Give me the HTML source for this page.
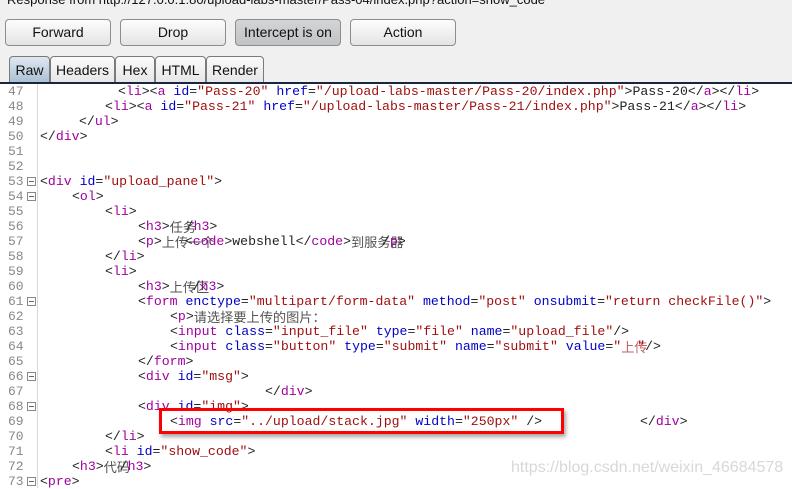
<!DOCTYPE html>
<html><head><meta charset="utf-8"><style>
*{margin:0;padding:0;box-sizing:border-box}
body{width:792px;height:488px;overflow:hidden;background:#fff;position:relative;font-family:"Liberation Sans","Noto Sans CJK SC",sans-serif}
.top{position:absolute;left:0;top:0;width:792px;height:83px;background:#f0f0f0}
.resp{position:absolute;left:7px;top:-8px;font-size:13px;color:#111;white-space:nowrap}
.btn{position:absolute;top:19px;height:27px;width:106px;border:1px solid #8d8d8d;border-radius:4px;background:linear-gradient(#fdfdfd,#e4e4e4);font-size:14px;text-align:center;line-height:25px;color:#111}
.btn.on{background:linear-gradient(#d3d4d8,#c2c3c7)}
.tab{position:absolute;top:56px;height:27px;border:1px solid #7a7a7a;border-bottom:none;border-radius:4px 4px 0 0;background:linear-gradient(#fafafa,#e6e6e6);font-size:14px;text-align:center;line-height:26px;color:#111}
.tab.sel{background:linear-gradient(#dfe8f0,#a9bfd3)}
.uline{position:absolute;left:0;top:82px;width:792px;height:2px;background:#1a2540}
.gut{position:absolute;left:37px;top:84px;width:1px;height:404px;background:#d8d8d8}
.code{position:absolute;left:0;top:84px;width:792px;font-family:"Liberation Mono","Noto Sans CJK SC",monospace;font-size:13.2px}
.r{position:absolute;height:15px;line-height:15px;white-space:pre;color:#222}
.n{position:absolute;left:8px;height:15px;line-height:15px;color:#888;font-family:"Liberation Mono",monospace;font-size:13px}
.f{position:absolute;left:27px;width:9px;height:9px;border:1px solid #888;background:#fff}
.f:after{content:"";position:absolute;left:1px;top:3px;width:5px;height:1px;background:#666}
.t{color:#a000a0}.a{color:#0000c8}.v{color:#a01010}
.c{display:inline-block;overflow:visible;color:#555;font-family:"Noto Sans CJK SC",sans-serif;vertical-align:top}
.box{position:absolute;left:159px;top:408px;width:405px;height:26px;border:3px solid #f00;box-shadow:2px 3px 4px rgba(0,0,0,.35)}
.wm{position:absolute;left:511px;top:459px;font-size:16px;color:#d8d8d8;white-space:nowrap}
</style></head><body>
<div class="top">
<div class="resp">Response from http://127.0.0.1:80/upload-labs-master/Pass-04/index.php?action=show_code</div>
<div class="btn" style="left:5px">Forward</div>
<div class="btn" style="left:120px">Drop</div>
<div class="btn on" style="left:235px">Intercept is on</div>
<div class="btn" style="left:350px">Action</div>
<div class="tab sel" style="left:9px;width:41px">Raw</div>
<div class="tab" style="left:50px;width:65px">Headers</div>
<div class="tab" style="left:115px;width:40px">Hex</div>
<div class="tab" style="left:155px;width:51px">HTML</div>
<div class="tab" style="left:206px;width:58px">Render</div>
</div>
<div class="uline"></div>
<div class="gut"></div>
<div class="code">
<div class="n" style="top:0">47</div><div class="r" style="top:0;left:118px">&lt;<span class="t">li</span>&gt;&lt;<span class="t">a</span> <span class="a">id</span>=<span class="v">"Pass-20"</span> <span class="a">href</span>=<span class="v">"/upload-labs-master/Pass-20/index.php"</span>&gt;Pass-20&lt;/<span class="t">a</span>&gt;&lt;/<span class="t">li</span>&gt;</div>
<div class="n" style="top:15px">48</div><div class="r" style="top:15px;left:105px">&lt;<span class="t">li</span>&gt;&lt;<span class="t">a</span> <span class="a">id</span>=<span class="v">"Pass-21"</span> <span class="a">href</span>=<span class="v">"/upload-labs-master/Pass-21/index.php"</span>&gt;Pass-21&lt;/<span class="t">a</span>&gt;&lt;/<span class="t">li</span>&gt;</div>
<div class="n" style="top:30px">49</div><div class="r" style="top:30px;left:79px">&lt;/<span class="t">ul</span>&gt;</div>
<div class="n" style="top:45px">50</div><div class="r" style="top:45px;left:40px">&lt;/<span class="t">div</span>&gt;</div>
<div class="n" style="top:60px">51</div>
<div class="n" style="top:75px">52</div>
<div class="n" style="top:90px">53</div><div class="f" style="top:93px"></div><div class="r" style="top:90px;left:40px">&lt;<span class="t">div</span> <span class="a">id</span>=<span class="v">"upload_panel"</span>&gt;</div>
<div class="n" style="top:105px">54</div><div class="f" style="top:108px"></div><div class="r" style="top:105px;left:72px">&lt;<span class="t">ol</span>&gt;</div>
<div class="n" style="top:120px">55</div><div class="r" style="top:120px;left:105px">&lt;<span class="t">li</span>&gt;</div>
<div class="n" style="top:135px">56</div><div class="r" style="top:135px;left:138px">&lt;<span class="t">h3</span>&gt;<span class="c" style="width:16px">任务</span>/<span class="t">h3</span>&gt;</div>
<div class="n" style="top:150px">57</div><div class="r" style="top:150px;left:138px">&lt;<span class="t">p</span>&gt;<span class="c" style="width:23px">上传一个</span>&lt;<span class="t">code</span>&gt;webshell&lt;/<span class="t">code</span>&gt;<span class="c" style="width:31px">到服务器</span>/<span class="t">p</span>&gt;</div>
<div class="n" style="top:165px">58</div><div class="r" style="top:165px;left:105px">&lt;/<span class="t">li</span>&gt;</div>
<div class="n" style="top:180px">59</div><div class="r" style="top:180px;left:105px">&lt;<span class="t">li</span>&gt;</div>
<div class="n" style="top:195px">60</div><div class="r" style="top:195px;left:138px">&lt;<span class="t">h3</span>&gt;<span class="c" style="width:23px">上传区</span>/<span class="t">h3</span>&gt;</div>
<div class="n" style="top:210px">61</div><div class="f" style="top:213px"></div><div class="r" style="top:210px;left:138px">&lt;<span class="t">form</span> <span class="a">enctype</span>=<span class="v">"multipart/form-data"</span> <span class="a">method</span>=<span class="v">"post"</span> <span class="a">onsubmit</span>=<span class="v">"return checkFile()"</span>&gt;</div>
<div class="n" style="top:225px">62</div><div class="r" style="top:225px;left:170px">&lt;<span class="t">p</span>&gt;<span class="c" style="width:55px">请选择要上传的图片：</span></div>
<div class="n" style="top:240px">63</div><div class="r" style="top:240px;left:170px">&lt;<span class="t">input</span> <span class="a">class</span>=<span class="v">"input_file"</span> <span class="a">type</span>=<span class="v">"file"</span> <span class="a">name</span>=<span class="v">"upload_file"</span>/&gt;</div>
<div class="n" style="top:255px">64</div><div class="r" style="top:255px;left:170px">&lt;<span class="t">input</span> <span class="a">class</span>=<span class="v">"button"</span> <span class="a">type</span>=<span class="v">"submit"</span> <span class="a">name</span>=<span class="v">"submit"</span> <span class="a">value</span>=<span class="v">"<span class="c" style="width:16px;color:#c06060">上传</span>"</span>/&gt;</div>
<div class="n" style="top:270px">65</div><div class="r" style="top:270px;left:138px">&lt;/<span class="t">form</span>&gt;</div>
<div class="n" style="top:285px">66</div><div class="f" style="top:288px"></div><div class="r" style="top:285px;left:138px">&lt;<span class="t">div</span> <span class="a">id</span>=<span class="v">"msg"</span>&gt;</div>
<div class="n" style="top:300px">67</div><div class="r" style="top:300px;left:265px">&lt;/<span class="t">div</span>&gt;</div>
<div class="n" style="top:315px">68</div><div class="f" style="top:318px"></div><div class="r" style="top:315px;left:138px">&lt;<span class="t">div</span> <span class="a">id</span>=<span class="v">"img"</span>&gt;</div>
<div class="n" style="top:330px">69</div><div class="r" style="top:330px;left:170px">&lt;<span class="t">img</span> <span class="a">src</span>=<span class="v">"../upload/stack.jpg"</span> <span class="a">width</span>=<span class="v">"250px"</span> /&gt;</div><div class="r" style="top:330px;left:640px">&lt;/<span class="t">div</span>&gt;</div>
<div class="n" style="top:345px">70</div><div class="r" style="top:345px;left:105px">&lt;/<span class="t">li</span>&gt;</div>
<div class="n" style="top:360px">71</div><div class="r" style="top:360px;left:105px">&lt;<span class="t">li</span> <span class="a">id</span>=<span class="v">"show_code"</span>&gt;</div>
<div class="n" style="top:375px">72</div><div class="r" style="top:375px;left:72px">&lt;<span class="t">h3</span>&gt;<span class="c" style="width:16px">代码</span>/<span class="t">h3</span>&gt;</div>
<div class="n" style="top:390px">73</div><div class="f" style="top:393px"></div><div class="r" style="top:390px;left:40px">&lt;<span class="t">pre</span>&gt;</div>
</div>
<div class="box"></div>
<div class="wm">https://blog.csdn.net/weixin_46684578</div>
</body></html>
